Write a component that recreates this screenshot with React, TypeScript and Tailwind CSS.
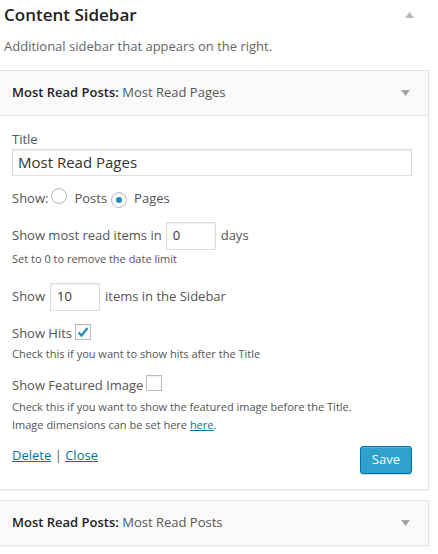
import React from "react";

function Tri({ up }: { up?: boolean }) {
  return (
    <svg width="9" height="6" viewBox="0 0 9 6" className="block">
      {up ? <path d="M0 6 L4.5 0 L9 6 Z" fill="#b4b9be" /> : <path d="M0 0 L9 0 L4.5 6 Z" fill="#a0a5aa" />}
    </svg>
  );
}

function Radio({ checked }: { checked?: boolean }) {
  return (
    <span className="inline-flex w-[16px] h-[16px] rounded-full border border-[#bbb] bg-white shadow-[inset_0_1px_2px_rgba(0,0,0,0.07)] items-center justify-center">
      {checked && <span className="w-[6px] h-[6px] rounded-full bg-[#1e8cbe]" />}
    </span>
  );
}

function Check({ checked }: { checked?: boolean }) {
  return (
    <span className="inline-flex w-[16px] h-[16px] border border-[#bbb] bg-white shadow-[inset_0_1px_2px_rgba(0,0,0,0.07)] items-center justify-center">
      {checked && (
        <svg width="12" height="12" viewBox="0 0 12 12">
          <path d="M1.5 6.5 L4.5 9.5 L10.5 2" stroke="#1e8cbe" strokeWidth="2.2" fill="none" />
        </svg>
      )}
    </span>
  );
}

function WidgetHeader({ title }: { title: string }) {
  return (
    <div className="h-[44px] bg-[#fafafa] flex items-center justify-between pl-[12px] pr-[18px] text-[13px]">
      <div>
        <span className="font-semibold text-[#222]">Most Read Posts:</span>
        <span className="text-[#555]"> {title}</span>
      </div>
      <Tri />
    </div>
  );
}

export default function App() {
  return (
    <div className="w-[438px] h-[554px] bg-white overflow-hidden font-['Open_Sans',sans-serif] text-[#555]">
      <div className="flex items-start justify-between pl-[4px] pr-[24px]">
        <div className="text-[17px] leading-[24px] font-semibold text-[#222] mt-[3px]">Content Sidebar</div>
        <div className="mt-[12px]"><Tri up /></div>
      </div>
      <div className="pl-[4px] text-[13px] leading-[18px] text-[#666] mt-[10px]">Additional sidebar that appears on the right.</div>

      <div className="mt-[15px] w-[429px] border-y border-r border-[#e5e5e5] shadow-[0_1px_1px_rgba(0,0,0,0.04)]">
        <div className="border-b border-[#e5e5e5]">
          <WidgetHeader title="Most Read Pages" />
        </div>
        <div className="pl-[12px] pr-[16px] pt-[14px] pb-[15px] bg-white text-[13px]">
          <div className="leading-[18px]">Title</div>
          <div className="mt-[1px] h-[27px] w-full border border-[#ddd] shadow-[inset_0_1px_2px_rgba(0,0,0,0.07)] flex items-center pl-[5px] text-[15px] text-[#333]">
            Most Read Pages
          </div>
          <div className="mt-[13px] h-[20px] flex items-center">
            <span>Show:</span>
            <span className="ml-[3px]"><Radio /></span>
            <span className="ml-[7px]">Posts</span>
            <span className="ml-[4px]"><Radio checked /></span>
            <span className="ml-[7px]">Pages</span>
          </div>
          <div className="mt-[13px] flex items-center">
            <span>Show most read items in</span>
            <span className="ml-[4px] h-[28px] w-[50px] border border-[#ddd] shadow-[inset_0_1px_2px_rgba(0,0,0,0.07)] flex items-center pl-[6px] text-[#333]">0</span>
            <span className="ml-[5px]">days</span>
          </div>
          <div className="mt-0 text-[11px] leading-[18px]">Set to 0 to remove the date limit</div>
          <div className="mt-[15px] flex items-center">
            <span>Show</span>
            <span className="ml-[5px] h-[28px] w-[50px] border border-[#ddd] shadow-[inset_0_1px_2px_rgba(0,0,0,0.07)] flex items-center pl-[6px] text-[#333]">10</span>
            <span className="ml-[5px]">items in the Sidebar</span>
          </div>
          <div className="mt-[13px] h-[20px] flex items-center">
            <span>Show Hits</span>
            <span className="ml-[3px]"><Check checked /></span>
          </div>
          <div className="mt-[1px] text-[11px] leading-[18px]">Check this if you want to show hits after the Title</div>
          <div className="mt-[13px] h-[20px] flex items-center">
            <span>Show Featured Image</span>
            <span className="ml-[3px]"><Check /></span>
          </div>
          <div className="mt-[2px] text-[11px] leading-[18px]">Check this if you want to show the featured image before the Title.</div>
          <div className="text-[11px] leading-[18px]">
            Image dimensions can be set here <a className="text-[#0074a2] underline">here</a>.
          </div>
          <div className="mt-[12px] flex items-start justify-between">
            <div className="leading-[18px] text-[13px]">
              <a className="text-[#0074a2] underline">Delete</a>
              <span className="text-[#555]"> | </span>
              <a className="text-[#0074a2] underline">Close</a>
            </div>
            <button className="h-[28px] px-[11px] rounded-[3px] bg-[#2ea2cc] border border-[#0074a2] text-white text-[13px] shadow-[inset_0_1px_0_rgba(120,200,230,0.5),0_1px_0_rgba(0,0,0,0.15)]">
              Save
            </button>
          </div>
        </div>
      </div>

      <div className="mt-[10px] w-[429px] border-y border-r border-[#e5e5e5] shadow-[0_1px_1px_rgba(0,0,0,0.04)]">
        <WidgetHeader title="Most Read Posts" />
      </div>
    </div>
  );
}
